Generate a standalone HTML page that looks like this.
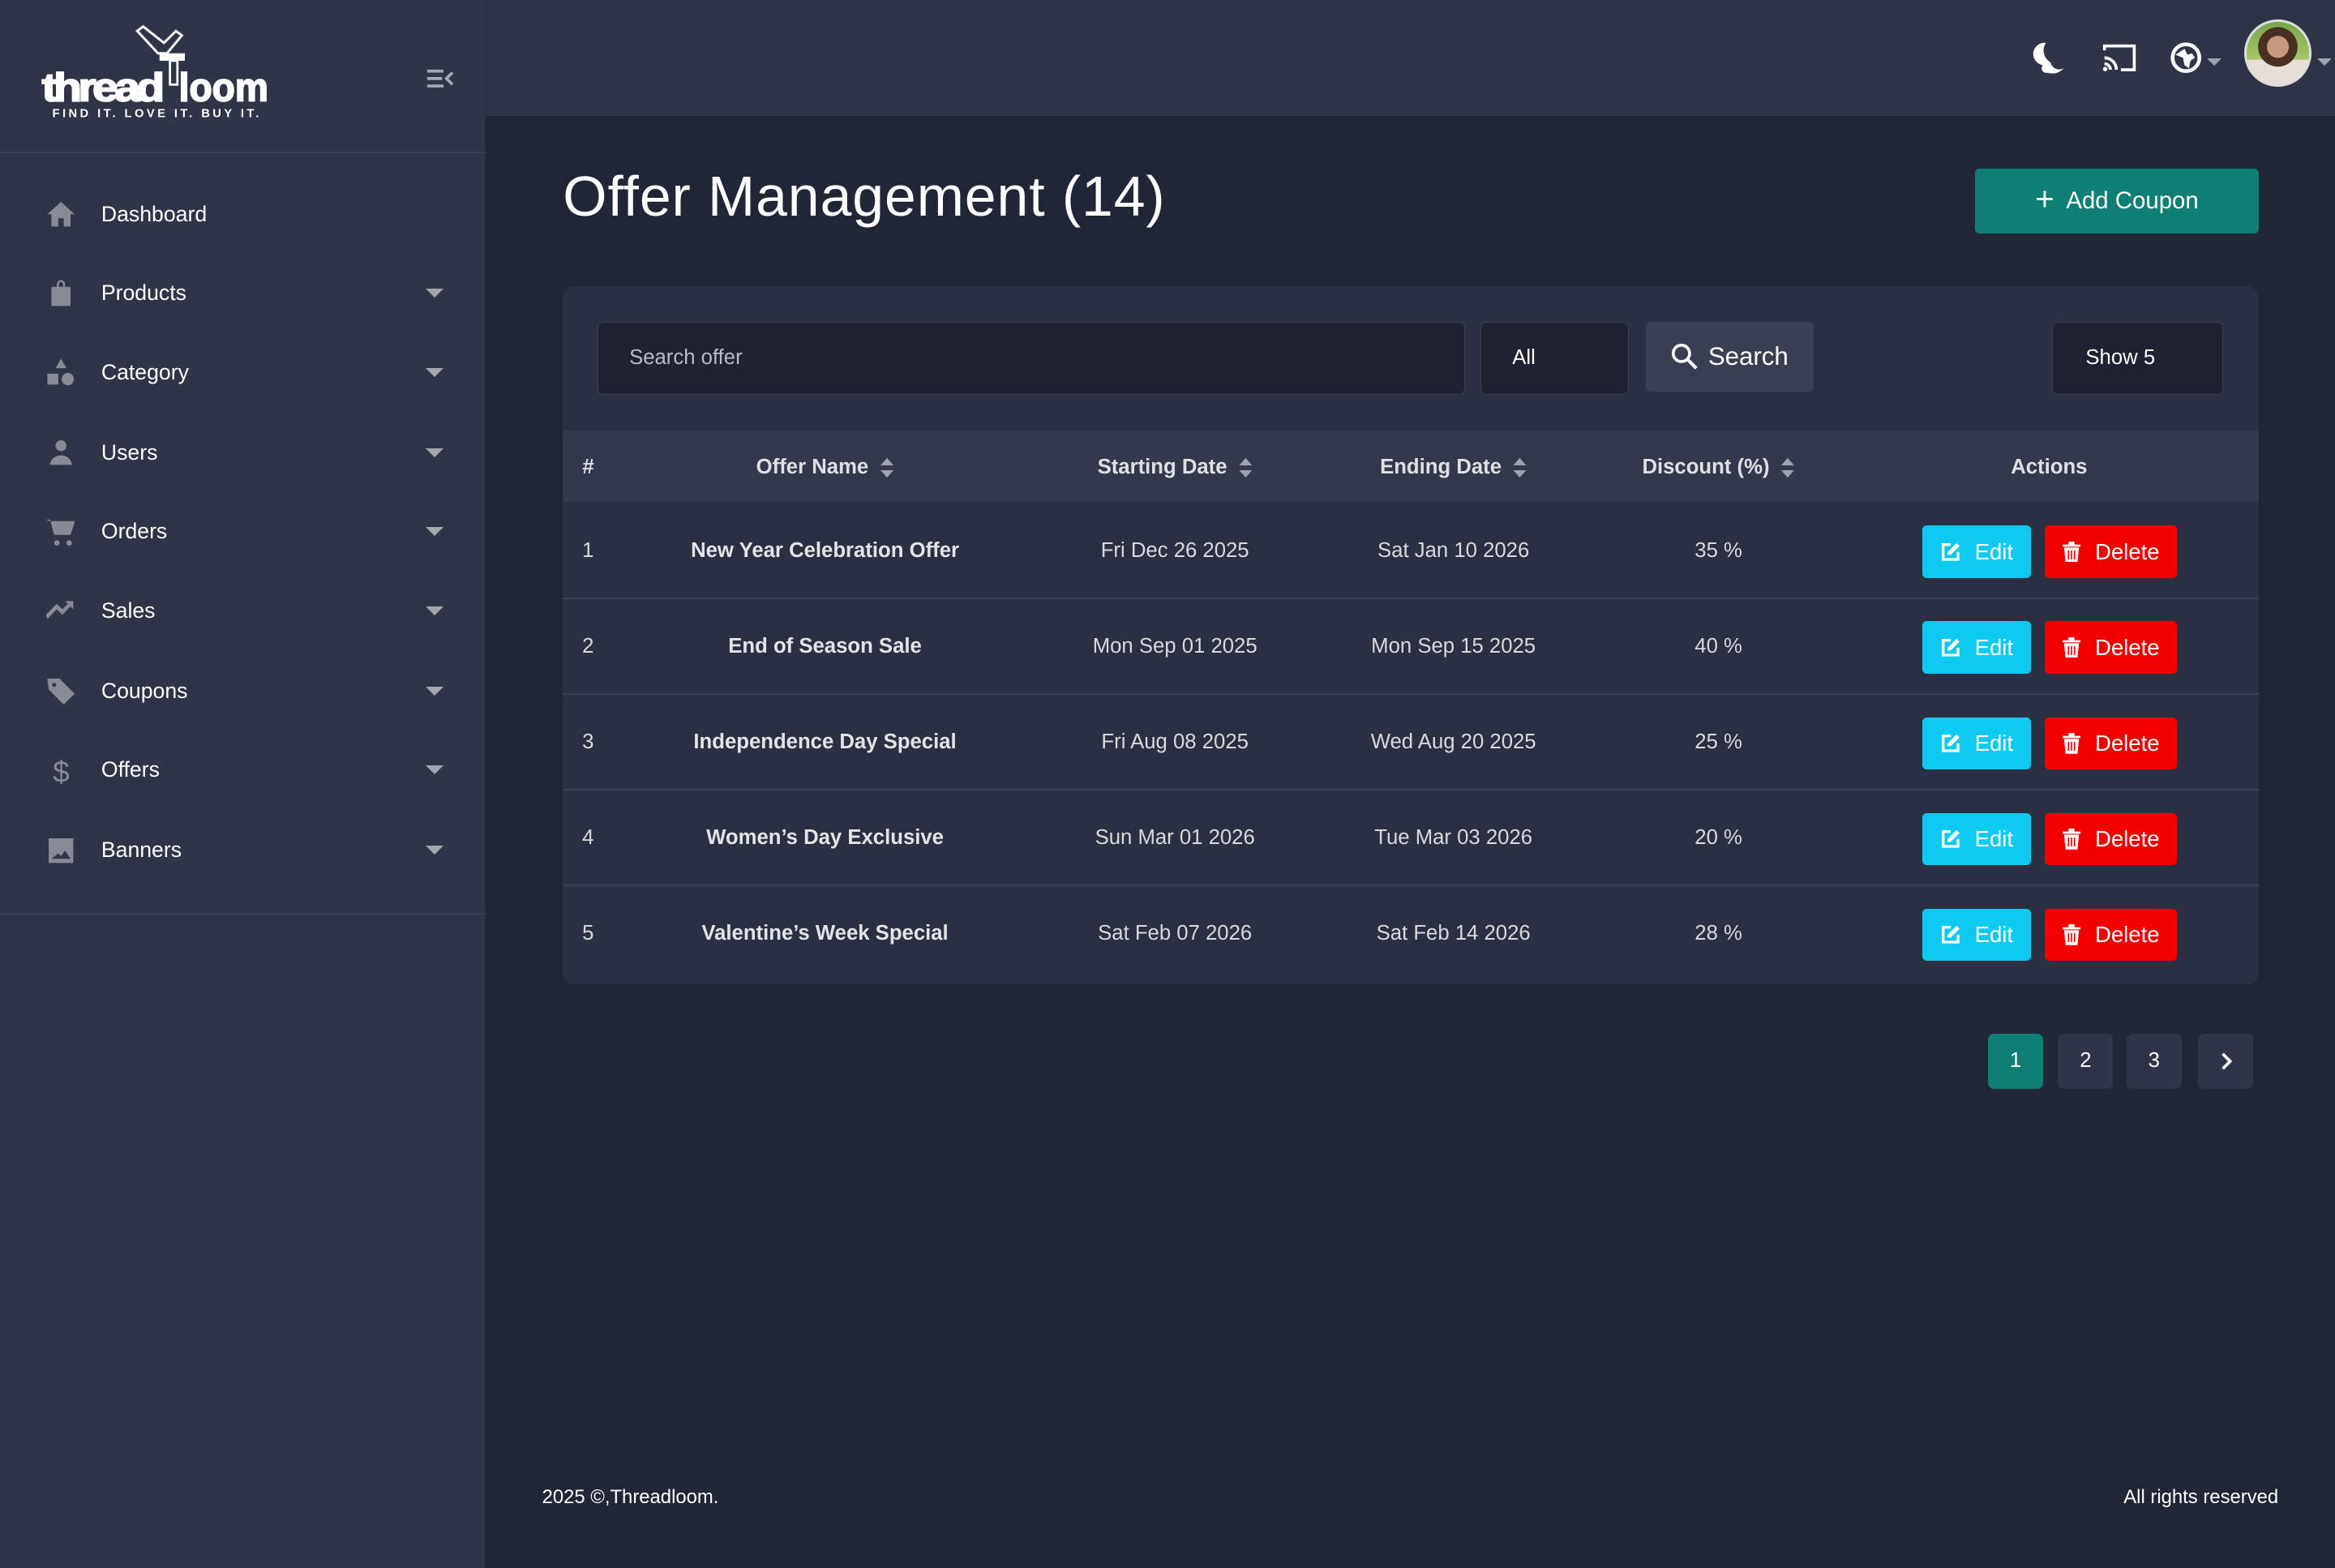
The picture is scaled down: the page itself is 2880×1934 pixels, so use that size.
<!DOCTYPE html>
<html><head><meta charset="utf-8"><style>
*{box-sizing:border-box;margin:0;padding:0}
html,body{width:2880px;height:1934px;overflow:hidden;background:#212636}
#root{zoom:1.83673;width:1568px;height:1053px;position:relative;font-family:"Liberation Sans",sans-serif;color:#e6e7ea;font-size:14px}
.abs{position:absolute}
#side{left:0;top:0;width:326px;height:1053px;background:#2f3446;border-right:1px solid #272b3b}
#hdr{left:326px;top:0;width:1242px;height:78px;background:#2f3446}
.mi{position:absolute;left:30px;width:270px;height:24px;display:flex;align-items:center}
.mi svg{width:22px;height:22px;fill:#868b96}
.mi span{margin-left:16px;font-size:14.5px;color:#fff}
.mi .car{position:absolute;right:2px;top:9px;border-left:6px solid transparent;border-right:6px solid transparent;border-top:6px solid #a3a7b0}
.c{position:absolute;transform:translateX(-50%);white-space:nowrap}
.btn{position:absolute;border-radius:3px;color:#fff;font-size:15px;display:flex;align-items:center;justify-content:center}
.pg{position:absolute;top:694px;width:37px;height:37px;border-radius:4px;background:#2f3446;color:#fff;display:flex;align-items:center;justify-content:center;font-size:14px}
.sort{display:inline-block;vertical-align:middle;margin-left:8px;width:9px;height:13px;position:relative}
.sort:before,.sort:after{content:"";position:absolute;left:0;border-left:4.5px solid transparent;border-right:4.5px solid transparent}
.sort:before{top:0;border-bottom:5px solid #9ea3ae}.sort:after{bottom:0;border-top:5px solid #9ea3ae}
.th{position:absolute;top:306px;font-weight:bold;font-size:14px;color:#dfe0e3;transform:translateX(-50%);white-space:nowrap}
</style></head><body><div id="root">
<div id="side" class="abs">
 <div class="abs" style="left:0;top:102px;width:326px;height:1px;background:#3a3f51"></div>
 <div class="abs" style="left:0;top:613px;width:326px;height:1px;background:#3a3f51"></div>
 <svg class="abs" style="left:26px;top:16px" width="158" height="66" viewBox="0 0 158 66">
  <path d="M66 5 L70 2 L84 13 L92 5 L96 8 L86 20 L80 20 Z" fill="none" stroke="#fff" stroke-width="1.6"/>
  <rect x="81" y="20" width="17" height="5" fill="#fff"/><rect x="88" y="25" width="5" height="16" fill="none" stroke="#fff" stroke-width="1.5"/>
  <text x="2" y="52" font-family="Liberation Sans" font-weight="bold" font-size="27" fill="#fff" stroke="#fff" stroke-width="1" letter-spacing="-2.2" textLength="80" lengthAdjust="spacingAndGlyphs">thread</text>
  <text x="94" y="52" font-family="Liberation Sans" font-weight="bold" font-size="27" fill="#fff" stroke="#fff" stroke-width="1" textLength="60" lengthAdjust="spacingAndGlyphs">loom</text>
  <text x="9" y="63" font-family="Liberation Sans" font-weight="bold" font-size="8" fill="#fff" letter-spacing="1.3" textLength="140" lengthAdjust="spacing">FIND IT. LOVE IT. BUY IT.</text>
 </svg>
 <svg class="abs" style="left:286px;top:46px" width="19" height="14" viewBox="0 0 19 14"><path d="M1 2h11M1 7h10M1 12h11M18 3l-4 4 4 4" stroke="#a3a8b5" stroke-width="2" fill="none"/></svg>
 <div class="mi" style="top:132px"><svg viewBox="0 0 24 24"><path d="M12 3 2 12h3v9h5v-6h4v6h5v-9h3z"/></svg><span>Dashboard</span></div>
 <div class="mi" style="top:185px"><svg viewBox="0 0 24 24"><path d="M6 7h12a1 1 0 0 1 1 1v13H5V8a1 1 0 0 1 1-1zM9 7V5a3 3 0 0 1 6 0v2h-1.5V5a1.5 1.5 0 0 0-3 0v2z"/></svg><span>Products</span><i class="car"></i></div>
 <div class="mi" style="top:238px"><svg viewBox="0 0 24 24"><path d="M12 2l4 7H8z"/><rect x="2" y="13" width="8" height="8"/><circle cx="17" cy="17" r="4.5"/></svg><span>Category</span><i class="car"></i></div>
 <div class="mi" style="top:292px"><svg viewBox="0 0 24 24"><circle cx="12" cy="7" r="4"/><path d="M4 21c0-4 4-7 8-7s8 3 8 7z"/></svg><span>Users</span><i class="car"></i></div>
 <div class="mi" style="top:345px"><svg viewBox="0 0 24 24"><path d="M1 3h3l3 11h12l3-9H6" /><path d="M5 4h17l-3 10H8z"/><circle cx="9" cy="20" r="2"/><circle cx="18" cy="20" r="2"/></svg><span>Orders</span><i class="car"></i></div>
 <div class="mi" style="top:398px"><svg viewBox="0 0 24 24"><path d="M2 18l7-7 4 4 6-6 2 2V5h-6l2 2-4 4-4-4-8 8z"/></svg><span>Sales</span><i class="car"></i></div>
 <div class="mi" style="top:452px"><svg viewBox="0 0 24 24"><path d="M2 3h9l11 11-8 8L3 11zM7 6a1.5 1.5 0 1 0 0.1 0z"/></svg><span>Coupons</span><i class="car"></i></div>
 <div class="mi" style="top:505px"><svg viewBox="0 0 24 24"><text x="6" y="21" font-size="22" font-family="Liberation Sans" fill="#868b96">$</text></svg><span>Offers</span><i class="car"></i></div>
 <div class="mi" style="top:559px"><svg viewBox="0 0 24 24"><path d="M3 3h18v18H3zM5 18h14l-4-6-3 4-2-2z"/></svg><span>Banners</span><i class="car"></i></div>
</div>
<div id="hdr" class="abs">
 <svg class="abs" style="left:1039px;top:28px" width="22" height="22" viewBox="0 0 22 22"><path d="M9 1a9 9 0 0 0 3 13 6 6 0 0 0 9 4 10 10 0 0 1-11 3 3 3 0 0 1-3-5A4 4 0 0 1 9 1z" fill="#fff"/></svg>
 <svg class="abs" style="left:1085px;top:29px" width="24" height="20" viewBox="0 0 24 20"><path d="M2 5V2h20v16h-9M2 10a8 8 0 0 1 8 8M2 14a4 4 0 0 1 4 4" stroke="#fff" stroke-width="2" fill="none"/><circle cx="2.5" cy="17.5" r="1.5" fill="#fff"/></svg>
 <svg class="abs" style="left:1131px;top:28px" width="22" height="22" viewBox="0 0 22 22"><circle cx="11" cy="11" r="9" stroke="#fff" stroke-width="2.5" fill="none"/><path d="M4 9l5 2 1 5 3 2 1-5 3-2-2-3-3 1-2-4z" fill="#fff"/></svg>
 <div class="abs" style="left:1156px;top:39px;border-left:5px solid transparent;border-right:5px solid transparent;border-top:5px solid #9ea3ae"></div>
 <div class="abs" style="left:1181px;top:13px;width:45px;height:45px;border-radius:50%;border:2px solid #ddd;background:radial-gradient(circle at 50% 40%,#c9997f 0 22%,#4a3022 23% 40%,transparent 41%),linear-gradient(#7aa64a,#a8c46a 60%,#e8e0d8 61%)"></div>
 <div class="abs" style="left:1230px;top:39px;border-left:5px solid transparent;border-right:5px solid transparent;border-top:5px solid #9ea3ae"></div>
</div>
<div class="abs" style="left:378px;top:110px;font-size:38px;color:#fff;letter-spacing:0.5px">Offer Management (14)</div>
<div class="btn" style="left:1326px;top:113px;width:191px;height:44px;background:#0f7f73;font-size:16px"><span style="font-size:22px;margin-right:8px;margin-top:-3px">+</span>Add Coupon</div>
<div class="abs" style="left:378px;top:192px;width:1139px;height:469px;background:#2a2f42;border-radius:8px;overflow:hidden">
 <div class="abs" style="left:0;top:97px;width:1139px;height:48px;background:#33384c"></div>
</div>
<div class="abs" style="left:401px;top:216px;width:583px;height:49px;background:#1f2231;border:1px solid #3a3f52;border-radius:4px;padding:16px 21px;color:#b9bcc4">Search offer</div>
<div class="abs" style="left:994px;top:216px;width:100px;height:49px;background:#1f2231;border:1px solid #3a3f52;border-radius:4px;padding:16px 21px;color:#fff">All</div>
<div class="btn" style="left:1105px;top:216px;width:113px;height:47px;background:#3a3f52;font-size:17px"><svg width="18" height="18" viewBox="0 0 18 18" style="margin-right:7px"><circle cx="7" cy="7" r="5.5" stroke="#fff" stroke-width="2" fill="none"/><path d="M11 11l6 6" stroke="#fff" stroke-width="2.2"/></svg>Search</div>
<div class="abs" style="left:1378px;top:216px;width:115px;height:49px;background:#1d2130;border:1px solid #3a3f52;border-radius:4px;padding:16px 22px;color:#fff">Show 5</div>
<div class="th" style="left:395px">#</div>
<div class="th" style="left:554px">Offer Name<i class="sort"></i></div>
<div class="th" style="left:789px">Starting Date<i class="sort"></i></div>
<div class="th" style="left:976px">Ending Date<i class="sort"></i></div>
<div class="th" style="left:1154px">Discount (%)<i class="sort"></i></div>
<div class="th" style="left:1376px">Actions</div>
<div id="rows"></div>
<div class="pg" style="left:1335px;background:#0f7f73">1</div>
<div class="pg" style="left:1382px">2</div>
<div class="pg" style="left:1428px">3</div>
<div class="pg" style="left:1476px"><svg width="10" height="12" viewBox="0 0 10 12"><path d="M3 1l5 5-5 5" stroke="#fff" stroke-width="2" fill="none"/></svg></div>
<div class="abs" style="left:364px;top:998px;font-size:13px;color:#fff">2025 ©,Threadloom.</div>
<div class="abs" style="right:38px;top:998px;font-size:13px;color:#fff">All rights reserved</div>
<script>
var d=[["1","New Year Celebration Offer","Fri Dec 26 2025","Sat Jan 10 2026","35 %"],["2","End of Season Sale","Mon Sep 01 2025","Mon Sep 15 2025","40 %"],["3","Independence Day Special","Fri Aug 08 2025","Wed Aug 20 2025","25 %"],["4","Women’s Day Exclusive","Sun Mar 01 2026","Tue Mar 03 2026","20 %"],["5","Valentine’s Week Special","Sat Feb 07 2026","Sat Feb 14 2026","28 %"]];
var h="";d.forEach(function(r,i){var cy=370+i*64.3;
if(i>0)h+='<div class="abs" style="left:378px;top:'+(cy-33)+'px;width:1139px;height:1px;background:#3a3f52"></div>';
var t=cy-8;
h+='<div class="abs" style="left:391px;top:'+t+'px;color:#d8dade">'+r[0]+'</div>';
h+='<div class="c" style="left:554px;top:'+t+'px;font-weight:bold;color:#e3e4e7">'+r[1]+'</div>';
h+='<div class="c" style="left:789px;top:'+t+'px;color:#d8dade">'+r[2]+'</div>';
h+='<div class="c" style="left:976px;top:'+t+'px;color:#d8dade">'+r[3]+'</div>';
h+='<div class="c" style="left:1154px;top:'+t+'px;color:#d8dade">'+r[4]+'</div>';
h+='<div class="btn" style="left:1291px;top:'+(cy-17)+'px;width:73px;height:35px;background:#0dcaf0"><svg width="14" height="14" viewBox="0 0 14 14" style="margin-right:9px"><path d="M7 2H2v10h10V7" stroke="#fff" stroke-width="1.8" fill="none"/><path d="M11 1l2 2-6 6H5V7z" fill="#fff"/></svg>Edit</div>';
h+='<div class="btn" style="left:1373px;top:'+(cy-17)+'px;width:89px;height:35px;background:#f20000"><svg width="12" height="14" viewBox="0 0 12 14" style="margin-right:10px"><path d="M0 2h12v1.5H0zM4 0h4v2H4zM1 4h10l-1 10H2z" fill="#fff"/><path d="M4 6v6M6 6v6M8 6v6" stroke="#f20000" stroke-width="0.9"/></svg>Delete</div>';
});document.getElementById("rows").innerHTML=h;
</script>
</div></body></html>
